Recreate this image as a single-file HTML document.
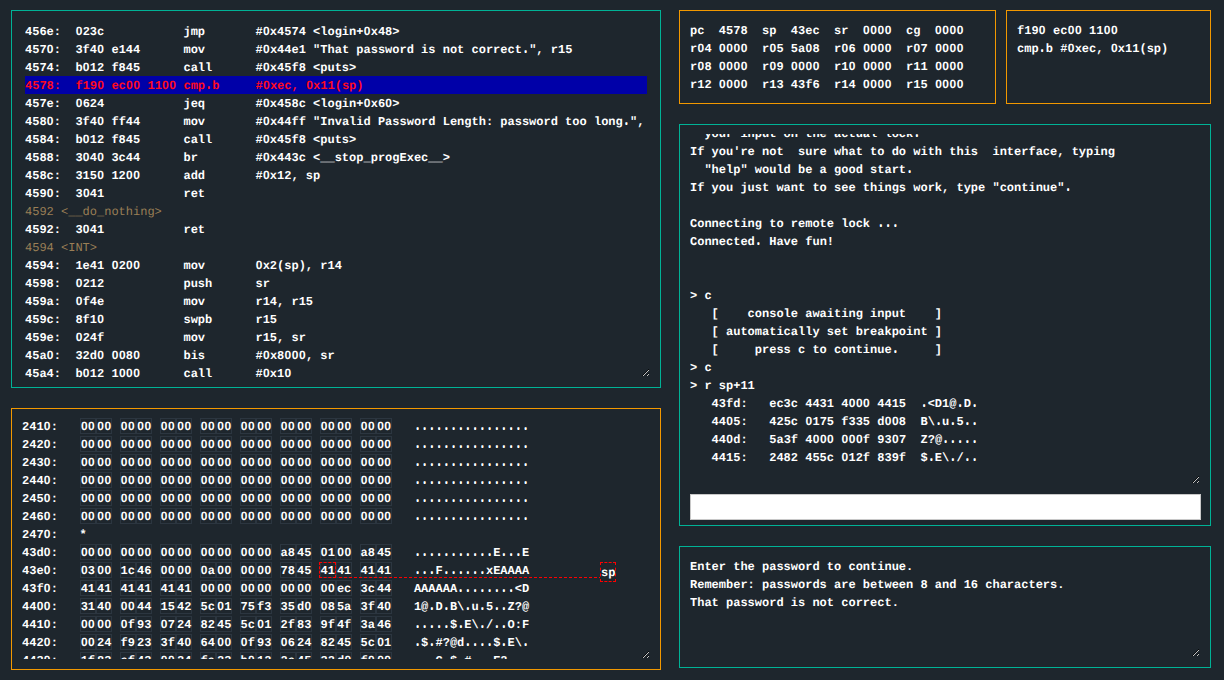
<!DOCTYPE html>
<html><head><meta charset="utf-8">
<style>
html,body{margin:0;padding:0;}
body{width:1224px;height:680px;background:#1e262d;position:relative;overflow:hidden;
 font-family:"Liberation Mono",monospace;font-weight:bold;font-size:12px;letter-spacing:0px;text-rendering:geometricPrecision;line-height:18px;color:#ffffff;}
.p{position:absolute;box-sizing:border-box;border:1px solid #00b296;}
.o{border-color:#f29800;}
.c{position:absolute;white-space:pre;overflow:hidden;}
.c div{height:18px;line-height:20px;}
.hl{background:#0000a8;color:#ff0a1e;}
.lbl{color:#9a7f56;font-weight:normal;}
#mem b{font-weight:bold;display:inline-block;box-sizing:border-box;width:16.4px;height:16px;border:1px solid #2c3640;padding:0;line-height:16px;vertical-align:top;margin-top:1px;}
u{text-decoration:none;text-shadow:0 -0.8px 0 currentColor;}
i{font-style:normal;font-family:"Liberation Sans",sans-serif;line-height:0;padding-left:.264px;letter-spacing:.264px;}
</style></head><body>
<div class="p" style="left:11px;top:10px;width:650px;height:378px"></div>
<div class="c" id="dis" style="left:25px;top:22px;width:622px;height:360px"><div>456e:  <i>0</i>23c           jmp       #<i>0</i>x4574 &lt;login+<i>0</i>x48&gt;</div><div>457<i>0</i>:  3f4<i>0</i> e144      mov       #<i>0</i>x44e1 &quot;That password is not correct<u>.</u>&quot;, r15</div><div>4574:  b<i>0</i>12 f845      call      #<i>0</i>x45f8 &lt;puts&gt;</div><div class="hl">4578:  f19<i>0</i> ec<i>0</i><i>0</i> 11<i>0</i><i>0</i> cmp<u>.</u>b     #<i>0</i>xec, <i>0</i>x11(sp)</div><div>457e:  <i>0</i>624           jeq       #<i>0</i>x458c &lt;login+<i>0</i>x6<i>0</i>&gt;</div><div>458<i>0</i>:  3f4<i>0</i> ff44      mov       #<i>0</i>x44ff &quot;Invalid Password Length: password too long<u>.</u>&quot;, r15</div><div>4584:  b<i>0</i>12 f845      call      #<i>0</i>x45f8 &lt;puts&gt;</div><div>4588:  3<i>0</i>4<i>0</i> 3c44      br        #<i>0</i>x443c &lt;__stop_progExec__&gt;</div><div>458c:  315<i>0</i> 12<i>0</i><i>0</i>      add       #<i>0</i>x12, sp</div><div>459<i>0</i>:  3<i>0</i>41           ret       </div><div class="lbl">4592 &lt;__do_nothing&gt;</div><div>4592:  3<i>0</i>41           ret       </div><div class="lbl">4594 &lt;INT&gt;</div><div>4594:  1e41 <i>0</i>2<i>0</i><i>0</i>      mov       <i>0</i>x2(sp), r14</div><div>4598:  <i>0</i>212           push      sr</div><div>459a:  <i>0</i>f4e           mov       r14, r15</div><div>459c:  8f1<i>0</i>           swpb      r15</div><div>459e:  <i>0</i>24f           mov       r15, sr</div><div>45a<i>0</i>:  32d<i>0</i> <i>0</i><i>0</i>8<i>0</i>      bis       #<i>0</i>x8<i>0</i><i>0</i><i>0</i>, sr</div><div>45a4:  b<i>0</i>12 1<i>0</i><i>0</i><i>0</i>      call      #<i>0</i>x1<i>0</i></div></div>
<div class="p o" style="left:11px;top:408px;width:650px;height:262px"></div>
<div class="c" id="mem" style="left:22px;top:417px;width:625px;height:242px"><div>241<i>0</i>:   <b><i>0</i><i>0</i></b><b><i>0</i><i>0</i></b> <b><i>0</i><i>0</i></b><b><i>0</i><i>0</i></b> <b><i>0</i><i>0</i></b><b><i>0</i><i>0</i></b> <b><i>0</i><i>0</i></b><b><i>0</i><i>0</i></b> <b><i>0</i><i>0</i></b><b><i>0</i><i>0</i></b> <b><i>0</i><i>0</i></b><b><i>0</i><i>0</i></b> <b><i>0</i><i>0</i></b><b><i>0</i><i>0</i></b> <b><i>0</i><i>0</i></b><b><i>0</i><i>0</i></b>   <u>.</u><u>.</u><u>.</u><u>.</u><u>.</u><u>.</u><u>.</u><u>.</u><u>.</u><u>.</u><u>.</u><u>.</u><u>.</u><u>.</u><u>.</u><u>.</u></div><div>242<i>0</i>:   <b><i>0</i><i>0</i></b><b><i>0</i><i>0</i></b> <b><i>0</i><i>0</i></b><b><i>0</i><i>0</i></b> <b><i>0</i><i>0</i></b><b><i>0</i><i>0</i></b> <b><i>0</i><i>0</i></b><b><i>0</i><i>0</i></b> <b><i>0</i><i>0</i></b><b><i>0</i><i>0</i></b> <b><i>0</i><i>0</i></b><b><i>0</i><i>0</i></b> <b><i>0</i><i>0</i></b><b><i>0</i><i>0</i></b> <b><i>0</i><i>0</i></b><b><i>0</i><i>0</i></b>   <u>.</u><u>.</u><u>.</u><u>.</u><u>.</u><u>.</u><u>.</u><u>.</u><u>.</u><u>.</u><u>.</u><u>.</u><u>.</u><u>.</u><u>.</u><u>.</u></div><div>243<i>0</i>:   <b><i>0</i><i>0</i></b><b><i>0</i><i>0</i></b> <b><i>0</i><i>0</i></b><b><i>0</i><i>0</i></b> <b><i>0</i><i>0</i></b><b><i>0</i><i>0</i></b> <b><i>0</i><i>0</i></b><b><i>0</i><i>0</i></b> <b><i>0</i><i>0</i></b><b><i>0</i><i>0</i></b> <b><i>0</i><i>0</i></b><b><i>0</i><i>0</i></b> <b><i>0</i><i>0</i></b><b><i>0</i><i>0</i></b> <b><i>0</i><i>0</i></b><b><i>0</i><i>0</i></b>   <u>.</u><u>.</u><u>.</u><u>.</u><u>.</u><u>.</u><u>.</u><u>.</u><u>.</u><u>.</u><u>.</u><u>.</u><u>.</u><u>.</u><u>.</u><u>.</u></div><div>244<i>0</i>:   <b><i>0</i><i>0</i></b><b><i>0</i><i>0</i></b> <b><i>0</i><i>0</i></b><b><i>0</i><i>0</i></b> <b><i>0</i><i>0</i></b><b><i>0</i><i>0</i></b> <b><i>0</i><i>0</i></b><b><i>0</i><i>0</i></b> <b><i>0</i><i>0</i></b><b><i>0</i><i>0</i></b> <b><i>0</i><i>0</i></b><b><i>0</i><i>0</i></b> <b><i>0</i><i>0</i></b><b><i>0</i><i>0</i></b> <b><i>0</i><i>0</i></b><b><i>0</i><i>0</i></b>   <u>.</u><u>.</u><u>.</u><u>.</u><u>.</u><u>.</u><u>.</u><u>.</u><u>.</u><u>.</u><u>.</u><u>.</u><u>.</u><u>.</u><u>.</u><u>.</u></div><div>245<i>0</i>:   <b><i>0</i><i>0</i></b><b><i>0</i><i>0</i></b> <b><i>0</i><i>0</i></b><b><i>0</i><i>0</i></b> <b><i>0</i><i>0</i></b><b><i>0</i><i>0</i></b> <b><i>0</i><i>0</i></b><b><i>0</i><i>0</i></b> <b><i>0</i><i>0</i></b><b><i>0</i><i>0</i></b> <b><i>0</i><i>0</i></b><b><i>0</i><i>0</i></b> <b><i>0</i><i>0</i></b><b><i>0</i><i>0</i></b> <b><i>0</i><i>0</i></b><b><i>0</i><i>0</i></b>   <u>.</u><u>.</u><u>.</u><u>.</u><u>.</u><u>.</u><u>.</u><u>.</u><u>.</u><u>.</u><u>.</u><u>.</u><u>.</u><u>.</u><u>.</u><u>.</u></div><div>246<i>0</i>:   <b><i>0</i><i>0</i></b><b><i>0</i><i>0</i></b> <b><i>0</i><i>0</i></b><b><i>0</i><i>0</i></b> <b><i>0</i><i>0</i></b><b><i>0</i><i>0</i></b> <b><i>0</i><i>0</i></b><b><i>0</i><i>0</i></b> <b><i>0</i><i>0</i></b><b><i>0</i><i>0</i></b> <b><i>0</i><i>0</i></b><b><i>0</i><i>0</i></b> <b><i>0</i><i>0</i></b><b><i>0</i><i>0</i></b> <b><i>0</i><i>0</i></b><b><i>0</i><i>0</i></b>   <u>.</u><u>.</u><u>.</u><u>.</u><u>.</u><u>.</u><u>.</u><u>.</u><u>.</u><u>.</u><u>.</u><u>.</u><u>.</u><u>.</u><u>.</u><u>.</u></div><div>247<i>0</i>:   *</div><div>43d<i>0</i>:   <b><i>0</i><i>0</i></b><b><i>0</i><i>0</i></b> <b><i>0</i><i>0</i></b><b><i>0</i><i>0</i></b> <b><i>0</i><i>0</i></b><b><i>0</i><i>0</i></b> <b><i>0</i><i>0</i></b><b><i>0</i><i>0</i></b> <b><i>0</i><i>0</i></b><b><i>0</i><i>0</i></b> <b>a8</b><b>45</b> <b><i>0</i>1</b><b><i>0</i><i>0</i></b> <b>a8</b><b>45</b>   <u>.</u><u>.</u><u>.</u><u>.</u><u>.</u><u>.</u><u>.</u><u>.</u><u>.</u><u>.</u><u>.</u>E<u>.</u><u>.</u><u>.</u>E</div><div>43e<i>0</i>:   <b><i>0</i>3</b><b><i>0</i><i>0</i></b> <b>1c</b><b>46</b> <b><i>0</i><i>0</i></b><b><i>0</i><i>0</i></b> <b><i>0</i>a</b><b><i>0</i><i>0</i></b> <b><i>0</i><i>0</i></b><b><i>0</i><i>0</i></b> <b>78</b><b>45</b> <b>41</b><b>41</b> <b>41</b><b>41</b>   <u>.</u><u>.</u><u>.</u>F<u>.</u><u>.</u><u>.</u><u>.</u><u>.</u><u>.</u>xEAAAA</div><div>43f<i>0</i>:   <b>41</b><b>41</b> <b>41</b><b>41</b> <b>41</b><b>41</b> <b><i>0</i><i>0</i></b><b><i>0</i><i>0</i></b> <b><i>0</i><i>0</i></b><b><i>0</i><i>0</i></b> <b><i>0</i><i>0</i></b><b><i>0</i><i>0</i></b> <b><i>0</i><i>0</i></b><b>ec</b> <b>3c</b><b>44</b>   AAAAAA<u>.</u><u>.</u><u>.</u><u>.</u><u>.</u><u>.</u><u>.</u><u>.</u>&lt;D</div><div>44<i>0</i><i>0</i>:   <b>31</b><b>4<i>0</i></b> <b><i>0</i><i>0</i></b><b>44</b> <b>15</b><b>42</b> <b>5c</b><b><i>0</i>1</b> <b>75</b><b>f3</b> <b>35</b><b>d<i>0</i></b> <b><i>0</i>8</b><b>5a</b> <b>3f</b><b>4<i>0</i></b>   1@<u>.</u>D<u>.</u>B\<u>.</u>u<u>.</u>5<u>.</u><u>.</u>Z?@</div><div>441<i>0</i>:   <b><i>0</i><i>0</i></b><b><i>0</i><i>0</i></b> <b><i>0</i>f</b><b>93</b> <b><i>0</i>7</b><b>24</b> <b>82</b><b>45</b> <b>5c</b><b><i>0</i>1</b> <b>2f</b><b>83</b> <b>9f</b><b>4f</b> <b>3a</b><b>46</b>   <u>.</u><u>.</u><u>.</u><u>.</u><u>.</u>$<u>.</u>E\<u>.</u>/<u>.</u><u>.</u>O:F</div><div>442<i>0</i>:   <b><i>0</i><i>0</i></b><b>24</b> <b>f9</b><b>23</b> <b>3f</b><b>4<i>0</i></b> <b>64</b><b><i>0</i><i>0</i></b> <b><i>0</i>f</b><b>93</b> <b><i>0</i>6</b><b>24</b> <b>82</b><b>45</b> <b>5c</b><b><i>0</i>1</b>   <u>.</u>$<u>.</u>#?@d<u>.</u><u>.</u><u>.</u><u>.</u>$<u>.</u>E\<u>.</u></div><div>443<i>0</i>:   <b>1f</b><b>83</b> <b>ef</b><b>43</b> <b><i>0</i><i>0</i></b><b>24</b> <b>fa</b><b>23</b> <b>b<i>0</i></b><b>12</b> <b>2e</b><b>45</b> <b>32</b><b>d<i>0</i></b> <b>f<i>0</i></b><b><i>0</i><i>0</i></b>   <u>.</u><u>.</u><u>.</u>C<u>.</u>$<u>.</u>#<u>.</u><u>.</u><u>.</u>E2<u>.</u><u>.</u><u>.</u></div></div>
<div class="p o" style="left:679px;top:10px;width:317px;height:94px"></div>
<div class="c" style="left:690px;top:22px;width:300px;height:80px">pc  4578  sp  43ec  sr  <i>0</i><i>0</i><i>0</i><i>0</i>  cg  <i>0</i><i>0</i><i>0</i><i>0</i>
r<i>0</i>4 <i>0</i><i>0</i><i>0</i><i>0</i>  r<i>0</i>5 5a<i>0</i>8  r<i>0</i>6 <i>0</i><i>0</i><i>0</i><i>0</i>  r<i>0</i>7 <i>0</i><i>0</i><i>0</i><i>0</i>
r<i>0</i>8 <i>0</i><i>0</i><i>0</i><i>0</i>  r<i>0</i>9 <i>0</i><i>0</i><i>0</i><i>0</i>  r1<i>0</i> <i>0</i><i>0</i><i>0</i><i>0</i>  r11 <i>0</i><i>0</i><i>0</i><i>0</i>
r12 <i>0</i><i>0</i><i>0</i><i>0</i>  r13 43f6  r14 <i>0</i><i>0</i><i>0</i><i>0</i>  r15 <i>0</i><i>0</i><i>0</i><i>0</i></div>
<div class="p o" style="left:1006px;top:10px;width:205px;height:94px"></div>
<div class="c" style="left:1017px;top:22px;width:190px;height:80px">f19<i>0</i> ec<i>0</i><i>0</i> 11<i>0</i><i>0</i>
cmp<u>.</u>b #<i>0</i>xec, <i>0</i>x11(sp)</div>
<div class="p" style="left:679px;top:124px;width:532px;height:402px"></div>
<div class="c" id="con" style="left:690px;top:134px;width:511px;height:350px"><div style="margin-top:-9px;line-height:18px;height:auto">  your input on the actual lock<u>.</u>
If you&#x27;re not  sure what to do with this  interface, typing
  &quot;help&quot; would be a good start<u>.</u>
If you just want to see things work, type &quot;continue&quot;<u>.</u>

Connecting to remote lock <u>.</u><u>.</u><u>.</u>
Connected<u>.</u> Have fun!


&gt; c
   [    console awaiting input    ]
   [ automatically set breakpoint ]
   [     press c to continue<u>.</u>     ]
&gt; c
&gt; r sp+11
   43fd:   ec3c 4431 4<i>0</i><i>0</i><i>0</i> 4415  <u>.</u>&lt;D1@<u>.</u>D<u>.</u>
   44<i>0</i>5:   425c <i>0</i>175 f335 d<i>0</i><i>0</i>8  B\<u>.</u>u<u>.</u>5<u>.</u><u>.</u>
   44<i>0</i>d:   5a3f 4<i>0</i><i>0</i><i>0</i> <i>0</i><i>0</i><i>0</i>f 93<i>0</i>7  Z?@<u>.</u><u>.</u><u>.</u><u>.</u><u>.</u>
   4415:   2482 455c <i>0</i>12f 839f  $<u>.</u>E\<u>.</u>/<u>.</u><u>.</u></div></div>
<div style="position:absolute;left:690px;top:494px;width:511px;height:26px;background:#fff;box-sizing:border-box;border:1px solid #c8c8c8"></div>
<div class="p" style="left:679px;top:546px;width:532px;height:122px"></div>
<div class="c" style="left:690px;top:558px;width:511px;height:100px">Enter the password to continue.
Remember: passwords are between 8 and 16 characters.
That password is not correct.</div>
<svg style="position:absolute;left:0;top:0" width="1224" height="680">
<g fill="none" stroke="#ff0000" stroke-width="1" stroke-dasharray="3 2">
<path d="M339 577.5 H600"/>
</g></svg>
<div style="position:absolute;left:319px;top:562px;width:17px;height:16px;box-sizing:border-box;border:1px dashed #ff0000"></div>
<div style="position:absolute;left:600px;top:562px;width:16px;height:20px;box-sizing:border-box;border:1px dashed #ff0000"></div>
<div class="c" style="left:601px;top:563px;width:15px;height:18px;line-height:20px">sp</div>
<svg style="position:absolute;left:0;top:0" width="1224" height="680" shape-rendering="crispEdges"><rect x="642" y="375" width="1" height="1" fill="#000" fill-opacity="0.75"/><rect x="643" y="374" width="1" height="1" fill="#000" fill-opacity="0.75"/><rect x="644" y="373" width="1" height="1" fill="#000" fill-opacity="0.75"/><rect x="645" y="372" width="1" height="1" fill="#000" fill-opacity="0.75"/><rect x="646" y="371" width="1" height="1" fill="#000" fill-opacity="0.75"/><rect x="647" y="370" width="1" height="1" fill="#000" fill-opacity="0.75"/><rect x="648" y="369" width="1" height="1" fill="#000" fill-opacity="0.75"/><rect x="646" y="375" width="1" height="1" fill="#000" fill-opacity="0.6"/><rect x="647" y="374" width="1" height="1" fill="#000" fill-opacity="0.6"/><rect x="648" y="373" width="1" height="1" fill="#000" fill-opacity="0.6"/><rect x="643" y="375" width="1" height="1" fill="#c4c4c4"/><rect x="644" y="374" width="1" height="1" fill="#c4c4c4"/><rect x="645" y="373" width="1" height="1" fill="#c4c4c4"/><rect x="646" y="372" width="1" height="1" fill="#c4c4c4"/><rect x="647" y="371" width="1" height="1" fill="#c4c4c4"/><rect x="648" y="370" width="1" height="1" fill="#c4c4c4"/><rect x="647" y="375" width="1" height="1" fill="#c4c4c4"/><rect x="648" y="374" width="1" height="1" fill="#c4c4c4"/><rect x="642" y="657" width="1" height="1" fill="#000" fill-opacity="0.75"/><rect x="643" y="656" width="1" height="1" fill="#000" fill-opacity="0.75"/><rect x="644" y="655" width="1" height="1" fill="#000" fill-opacity="0.75"/><rect x="645" y="654" width="1" height="1" fill="#000" fill-opacity="0.75"/><rect x="646" y="653" width="1" height="1" fill="#000" fill-opacity="0.75"/><rect x="647" y="652" width="1" height="1" fill="#000" fill-opacity="0.75"/><rect x="648" y="651" width="1" height="1" fill="#000" fill-opacity="0.75"/><rect x="646" y="657" width="1" height="1" fill="#000" fill-opacity="0.6"/><rect x="647" y="656" width="1" height="1" fill="#000" fill-opacity="0.6"/><rect x="648" y="655" width="1" height="1" fill="#000" fill-opacity="0.6"/><rect x="643" y="657" width="1" height="1" fill="#c4c4c4"/><rect x="644" y="656" width="1" height="1" fill="#c4c4c4"/><rect x="645" y="655" width="1" height="1" fill="#c4c4c4"/><rect x="646" y="654" width="1" height="1" fill="#c4c4c4"/><rect x="647" y="653" width="1" height="1" fill="#c4c4c4"/><rect x="648" y="652" width="1" height="1" fill="#c4c4c4"/><rect x="647" y="657" width="1" height="1" fill="#c4c4c4"/><rect x="648" y="656" width="1" height="1" fill="#c4c4c4"/><rect x="1192" y="482" width="1" height="1" fill="#000" fill-opacity="0.75"/><rect x="1193" y="481" width="1" height="1" fill="#000" fill-opacity="0.75"/><rect x="1194" y="480" width="1" height="1" fill="#000" fill-opacity="0.75"/><rect x="1195" y="479" width="1" height="1" fill="#000" fill-opacity="0.75"/><rect x="1196" y="478" width="1" height="1" fill="#000" fill-opacity="0.75"/><rect x="1197" y="477" width="1" height="1" fill="#000" fill-opacity="0.75"/><rect x="1198" y="476" width="1" height="1" fill="#000" fill-opacity="0.75"/><rect x="1196" y="482" width="1" height="1" fill="#000" fill-opacity="0.6"/><rect x="1197" y="481" width="1" height="1" fill="#000" fill-opacity="0.6"/><rect x="1198" y="480" width="1" height="1" fill="#000" fill-opacity="0.6"/><rect x="1193" y="482" width="1" height="1" fill="#c4c4c4"/><rect x="1194" y="481" width="1" height="1" fill="#c4c4c4"/><rect x="1195" y="480" width="1" height="1" fill="#c4c4c4"/><rect x="1196" y="479" width="1" height="1" fill="#c4c4c4"/><rect x="1197" y="478" width="1" height="1" fill="#c4c4c4"/><rect x="1198" y="477" width="1" height="1" fill="#c4c4c4"/><rect x="1197" y="482" width="1" height="1" fill="#c4c4c4"/><rect x="1198" y="481" width="1" height="1" fill="#c4c4c4"/><rect x="1192" y="655" width="1" height="1" fill="#000" fill-opacity="0.75"/><rect x="1193" y="654" width="1" height="1" fill="#000" fill-opacity="0.75"/><rect x="1194" y="653" width="1" height="1" fill="#000" fill-opacity="0.75"/><rect x="1195" y="652" width="1" height="1" fill="#000" fill-opacity="0.75"/><rect x="1196" y="651" width="1" height="1" fill="#000" fill-opacity="0.75"/><rect x="1197" y="650" width="1" height="1" fill="#000" fill-opacity="0.75"/><rect x="1198" y="649" width="1" height="1" fill="#000" fill-opacity="0.75"/><rect x="1196" y="655" width="1" height="1" fill="#000" fill-opacity="0.6"/><rect x="1197" y="654" width="1" height="1" fill="#000" fill-opacity="0.6"/><rect x="1198" y="653" width="1" height="1" fill="#000" fill-opacity="0.6"/><rect x="1193" y="655" width="1" height="1" fill="#c4c4c4"/><rect x="1194" y="654" width="1" height="1" fill="#c4c4c4"/><rect x="1195" y="653" width="1" height="1" fill="#c4c4c4"/><rect x="1196" y="652" width="1" height="1" fill="#c4c4c4"/><rect x="1197" y="651" width="1" height="1" fill="#c4c4c4"/><rect x="1198" y="650" width="1" height="1" fill="#c4c4c4"/><rect x="1197" y="655" width="1" height="1" fill="#c4c4c4"/><rect x="1198" y="654" width="1" height="1" fill="#c4c4c4"/></svg>
</body></html>
